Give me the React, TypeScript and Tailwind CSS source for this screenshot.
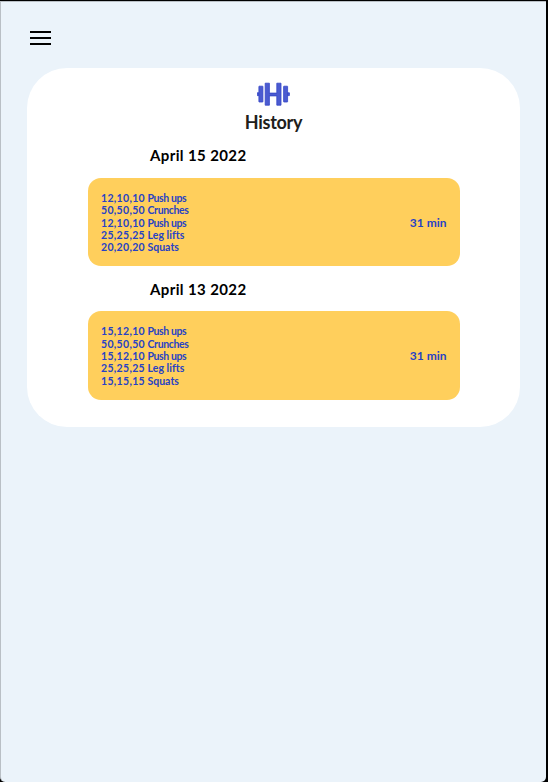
type Exercise = 'Push ups' | 'Crunches' | 'Leg lifts' | 'Squats';
type Workout = { date: string; sets: { reps: string; name: Exercise }[]; duration: string };

const nameTracking: Record<Exercise, string> = {
  'Push ups': 'tracking-[-0.42px]',
  Crunches: 'tracking-[-0.36px]',
  'Leg lifts': 'tracking-[0.06px]',
  Squats: 'tracking-[0px]',
};

const workouts: Workout[] = [
  {
    date: 'April 15 2022',
    duration: '31 min',
    sets: [
      { reps: '12,10,10', name: 'Push ups' },
      { reps: '50,50,50', name: 'Crunches' },
      { reps: '12,10,10', name: 'Push ups' },
      { reps: '25,25,25', name: 'Leg lifts' },
      { reps: '20,20,20', name: 'Squats' },
    ],
  },
  {
    date: 'April 13 2022',
    duration: '31 min',
    sets: [
      { reps: '15,12,10', name: 'Push ups' },
      { reps: '50,50,50', name: 'Crunches' },
      { reps: '15,12,10', name: 'Push ups' },
      { reps: '25,25,25', name: 'Leg lifts' },
      { reps: '15,15,15', name: 'Squats' },
    ],
  },
];

function DumbbellLogo() {
  return (
    <svg width="34" height="25" viewBox="0 0 34 25" fill="#4b5bd0" stroke="#3345c8" strokeWidth="0.8" aria-hidden="true">
      <path d="M0.2 10.8h2v2.8h-2zM30.4 10.8h2v2.8h-2z" />
      <rect x="1.9" y="4.2" width="4" height="15.8" rx="0.3" />
      <rect x="26.6" y="4.2" width="4" height="15.8" rx="0.3" />
      <path d="M8.2 1.2h4.2v9.9h7.4V1.2H24v22h-4.2v-9.3h-7.4v9.3H8.2z" />
    </svg>
  );
}

function MenuButton() {
  return (
    <button aria-label="Menu" className="ml-[29px] mt-[29px] flex w-[21px] flex-col gap-[4px]">
      <span className="h-[2px] bg-black" />
      <span className="h-[2px] bg-black" />
      <span className="h-[2px] bg-black" />
    </button>
  );
}

function WorkoutEntry({ workout }: { workout: Workout }) {
  return (
    <section className="mb-[12.5px]">
      <h2 className="ml-[123px] h-[32.5px] whitespace-nowrap text-[15px] font-bold leading-[20px] tracking-[0.38px]">
        {workout.date}
      </h2>
      <div className="ml-[60.5px] flex h-[88.5px] w-[372px] items-center justify-between rounded-[13px] bg-[#ffcf5c] pl-[13.5px] pr-[13px] text-[#2742c5]">
        <ul className="pt-[2px] text-[10.5px] font-bold leading-[12.4px]">
          {workout.sets.map((set, i) => (
            <li key={i} className="flex">
              <span className="w-[46.5px] tracking-[0.32px]">{set.reps}</span>
              <span className={nameTracking[set.name]}>{set.name}</span>
            </li>
          ))}
        </ul>
        <span className="pt-[2px] text-[12px] font-bold">{workout.duration}</span>
      </div>
    </section>
  );
}

export default function App() {
  return (
    <div className="h-[782px] w-[548px] bg-black pr-[2px] pt-px font-['Lato','Liberation_Sans',sans-serif]">
      <div className="flex h-full flex-col rounded-b-[5px] border-l border-t border-[#b9bfc5] bg-[#ebf3fa]">
        <MenuButton />
        <main className="ml-[26px] mt-[23px] flex h-[358.5px] w-[493px] flex-col rounded-[40px] bg-white">
          <header className="flex flex-col items-center pt-[14px]">
            <DumbbellLogo />
            <h1 className="mb-[11px] mt-[3px] text-[18px] font-bold leading-[24px] tracking-[-0.3px] text-[#20201b]">
              History
            </h1>
          </header>
          {workouts.map((w) => (
            <WorkoutEntry key={w.date} workout={w} />
          ))}
        </main>
      </div>
    </div>
  );
}
